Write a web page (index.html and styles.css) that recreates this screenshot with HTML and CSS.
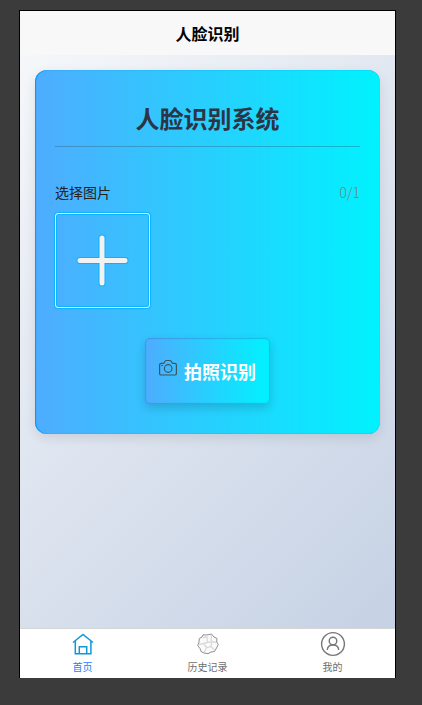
FILE: index.html
```html
<!DOCTYPE html>
<html lang="zh-CN">
<head>
<meta charset="utf-8">
<meta name="viewport" content="width=device-width, initial-scale=1">
<title>人脸识别</title>
<link rel="stylesheet" href="styles.css">
</head>
<body>
<div class="phone">
  <header class="navbar">人脸识别</header>
  <main class="page">
    <section class="card">
      <h1 class="card-title">人脸识别系统</h1>
      <div class="uploader">
        <div class="uploader-head">
          <span>选择图片</span>
          <span class="uploader-count">0/1</span>
        </div>
        <button class="uploader-add" type="button" aria-label="选择图片">
          <svg width="53" height="53" viewBox="0 0 53 53" fill="none" stroke-linecap="round">
            <path d="M26 4V49M4 26.500H49" stroke="#0cb0ff" stroke-width="7"/>
            <path d="M26 4V49M4 26.500H49" stroke="#f2f2f2" stroke-width="5"/>
          </svg>
        </button>
      </div>
      <button class="capture" type="button">
        <svg width="18" height="18" viewBox="0 0 18 18" fill="none" stroke="#3d5560" stroke-width="1.200">
          <path d="M2.200 4.300H4.500C5.600 4.300 5.600 1.500 7.200 1.500H11C12.600 1.500 12.600 4.300 13.700 4.300H15.800Q17.400 4.300 17.400 5.900V14.400Q17.400 16 15.800 16H2.200Q.6 16 .6 14.400V5.900Q.6 4.300 2.200 4.300Z"/>
          <circle cx="9.200" cy="9.500" r="3.800"/>
          <path d="M2.400 6.500H4"/>
        </svg>
        <span>拍照识别</span>
      </button>
    </section>
  </main>
  <nav class="tabbar">
    <a class="tab tab-active" href="#home">
      <svg width="28" height="28" viewBox="0 0 28 28" fill="none" stroke="#1296db" stroke-width="1.500">
        <path d="M4 12.500L14 4.500L24 12.500M6.300 10.800V23.800H21.900V10.800M10.300 23.500V16.800H17.700V23.500"/>
      </svg>
      <span>首页</span>
    </a>
    <a class="tab" href="#history">
      <svg width="28" height="28" viewBox="0 0 28 28" fill="none">
        <path d="M9 4.800L12.500 5L17.500 4L20 7L23 8.500L22.700 12L24.300 14.500L22.500 18L20.500 21.500L17 22L14 23.700L10 23L7 21.500L6 18.500L3.700 15.500L5 12L5.300 8.500L8 7Z" fill="#fafafa" stroke="#909090" stroke-linejoin="round"/>
        <path d="M8.500 7.500L13 7L13.500 12.500L18 11.500L22 12.500M17.500 5L17 11.500M20.500 20L17 16.500L12.500 17.500L10.500 22M17 16.500L18 11.500M5 14.500L9.500 13.500L13.500 12.500M12.500 17.500L9.500 13.500" stroke="#dadada" stroke-width="1.300"/>
      </svg>
      <span>历史记录</span>
    </a>
    <a class="tab" href="#mine">
      <svg width="28" height="28" viewBox="0 0 28 28" fill="none" stroke="#777" stroke-width="1.400">
        <circle cx="14" cy="14" r="11.400"/>
        <circle cx="14" cy="11" r="3.800"/>
        <path d="M8.300 20Q8.500 15 14 15Q19.500 15 19.700 20"/>
      </svg>
      <span>我的</span>
    </a>
  </nav>
</div>
</body>
</html>
```
FILE: styles.css
```css
* {
  box-sizing: border-box;
}

body {
  margin: 0;
  min-height: 100vh;
  display: flex;
  padding: 10px 26px 27px 19px;
  background: #3b3b3b;
  font-family: "Noto Sans CJK SC", sans-serif;
}

button {
  font: inherit;
  cursor: pointer;
}

svg {
  display: block;
}

.phone {
  flex: 1;
  display: flex;
  flex-direction: column;
  border: 1px solid #000;
  border-bottom: 0;
}

.navbar {
  height: 44px;
  line-height: 44px;
  background: #f8f8f8;
  color: #000;
  font-size: 16px;
  font-weight: 700;
  text-align: center;
}

.page {
  flex: 1;
  padding: 15px;
  background: linear-gradient(135deg, #f5f7fa 0%, #c5d1e4 100%);
}

.card {
  padding: 30px 20px;
  border-radius: 12px;
  background: linear-gradient(90deg, #4facfe 0%, #00f2fe 100%);
  box-shadow: inset 1px 0 1px #0096ff, inset 0 0 1px #00a8ff, 0 4px 12px rgba(0, 0, 0, 0.1);
}

.card-title {
  margin: 0 0 36px;
  padding-bottom: 10px;
  border-bottom: 1px solid rgba(44, 62, 80, 0.3);
  color: #2c3545;
  font-size: 24px;
  line-height: 36px;
  font-weight: 700;
  text-align: center;
}

.uploader-head {
  display: flex;
  justify-content: space-between;
  margin-bottom: 12px;
  color: #222;
  font-size: 14px;
  line-height: 18px;
}

.uploader-count {
  color: #808080;
  font-weight: 300;
}

.uploader-add {
  display: flex;
  align-items: center;
  justify-content: center;
  width: 95px;
  height: 95px;
  padding: 0;
  border: 1px solid #e8faff;
  border-radius: 3px;
  background: none;
  box-shadow: 0 0 1px 1px #0cb4ff, inset 0 0 1px 1px #0cb4ff;
}

.capture {
  display: flex;
  align-items: center;
  justify-content: center;
  gap: 7px;
  height: 66px;
  margin: 30px auto 0;
  padding: 0 14px;
  border: 0;
  border-radius: 5px;
  background: linear-gradient(90deg, #4facfe 0%, #00f2fe 100%);
  box-shadow: inset 0 0 1px 1px rgba(40, 90, 180, 0.3), 0 4px 10px rgba(0, 0, 0, 0.16);
  color: #fff;
  font-size: 18px;
  font-weight: 700;
}

.capture svg {
  margin-bottom: 6px;
}

.tabbar {
  display: flex;
  height: 50px;
  border-top: 1px solid #d5d5d5;
  background: #fff;
}

.tab {
  flex: 1;
  display: flex;
  flex-direction: column;
  align-items: center;
  padding-top: 1px;
  color: #6e6e6e;
  font-size: 10px;
  line-height: 18px;
  text-decoration: none;
}

.tab-active {
  color: #1a80ff;
}
```
